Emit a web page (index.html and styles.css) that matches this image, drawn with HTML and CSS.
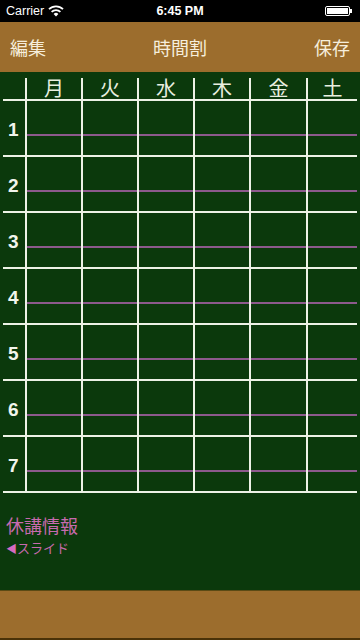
FILE: index.html
```html
<!DOCTYPE html>
<html lang="ja">
<head>
<meta charset="utf-8">
<link rel="stylesheet" href="styles.css">
</head>
<body>
<div class="screen">
  <div class="status">
    <div class="status-left">
      <span>Carrier</span>
      <svg class="wifi" width="16" height="12" viewBox="0 0 16 12">
        <path d="M1 4.2 A10 10 0 0 1 15 4.2" stroke="#fff" stroke-width="1.8" fill="none"/>
        <path d="M3.6 6.8 A6.4 6.4 0 0 1 12.4 6.8" stroke="#fff" stroke-width="1.8" fill="none"/>
        <path d="M8 11.5 L5.6 9 A3.4 3.4 0 0 1 10.4 9 Z" fill="#fff"/>
      </svg>
    </div>
    <div class="status-time">6:45 PM</div>
    <div class="status-right">
      <div class="battery"><div class="battery-fill"></div></div>
      <div class="battery-nib"></div>
    </div>
  </div>
  <div class="navbar">
    <span class="nav-btn">編集</span>
    <span class="nav-title">時間割</span>
    <span class="nav-btn">保存</span>
  </div>
  <div class="board">
    <div class="timetable">
      <div class="row head">
        <div class="corner"></div>
        <div class="day"><span>月</span></div>
        <div class="day"><span>火</span></div>
        <div class="day"><span>水</span></div>
        <div class="day"><span>木</span></div>
        <div class="day"><span>金</span></div>
        <div class="day"><span>土</span></div>
      </div>
      <div class="row period"><div class="num">1</div><div class="cell"></div><div class="cell"></div><div class="cell"></div><div class="cell"></div><div class="cell"></div><div class="cell"></div></div>
      <div class="row period"><div class="num">2</div><div class="cell"></div><div class="cell"></div><div class="cell"></div><div class="cell"></div><div class="cell"></div><div class="cell"></div></div>
      <div class="row period"><div class="num">3</div><div class="cell"></div><div class="cell"></div><div class="cell"></div><div class="cell"></div><div class="cell"></div><div class="cell"></div></div>
      <div class="row period"><div class="num">4</div><div class="cell"></div><div class="cell"></div><div class="cell"></div><div class="cell"></div><div class="cell"></div><div class="cell"></div></div>
      <div class="row period"><div class="num">5</div><div class="cell"></div><div class="cell"></div><div class="cell"></div><div class="cell"></div><div class="cell"></div><div class="cell"></div></div>
      <div class="row period"><div class="num">6</div><div class="cell"></div><div class="cell"></div><div class="cell"></div><div class="cell"></div><div class="cell"></div><div class="cell"></div></div>
      <div class="row period last"><div class="num">7</div><div class="cell"></div><div class="cell"></div><div class="cell"></div><div class="cell"></div><div class="cell"></div><div class="cell"></div></div>
    </div>
    <div class="notice">
      <div class="notice-title">休講情報</div>
      <div class="notice-hint"><span class="arrow">◀</span>スライド</div>
    </div>
  </div>
  <div class="footer"></div>
</div>
</body>
</html>
```

FILE: styles.css
```css
* { box-sizing: border-box; }
html, body { margin: 0; padding: 0; background: #000; }
.screen {
  width: 360px;
  height: 640px;
  display: flex;
  flex-direction: column;
  font-family: "Liberation Sans", "Noto Sans CJK JP", sans-serif;
  overflow: hidden;
}
.status {
  height: 22px;
  background: #000;
  color: #fff;
  display: flex;
  align-items: center;
  justify-content: space-between;
  padding: 0 6px;
  font-size: 12.5px;
}
.status-left { display: flex; align-items: center; gap: 4px; width: 90px; }
.wifi { margin-top: -1px; }
.status-time { font-weight: bold; font-size: 12.5px; }
.status-right { display: flex; align-items: center; width: 90px; justify-content: flex-end; }
.battery {
  width: 25px;
  height: 10px;
  border: 1px solid #fff;
  border-radius: 2px;
  padding: 1px;
}
.battery-fill { width: 100%; height: 100%; background: #fff; }
.battery-nib { width: 2px; height: 4px; background: #fff; margin-right: 2px; }
.navbar {
  height: 50px;
  background: #9c6d2d;
  display: flex;
  align-items: center;
  justify-content: space-between;
  padding: 0 10px;
  color: #f6eedc;
  font-family: "Noto Sans CJK JP", sans-serif;
  font-size: 18px;
}
.board {
  flex: 1;
  background: #0b390c;
  padding-left: 3px;
}
.timetable { width: 354px; }
.row {
  display: grid;
  grid-template-columns: 22px 56px 56px 56px 56px 57px 51px;
}
.head { height: 29px; border-bottom: 2px solid #edf2e6; }
.day {
  margin-top: 6px;
  border-left: 2px solid #edf2e6;
  display: flex;
  justify-content: center;
  align-items: flex-end;
  color: #e9efe0;
  font-family: "Noto Sans CJK JP", sans-serif;
  font-size: 20px;
  line-height: 20px;
  padding-bottom: 1px;
}
.period { height: 56px; border-bottom: 2px solid #edf2e6; }
.period .num {
  color: #f2f5ec;
  font-weight: bold;
  font-size: 19px;
  line-height: 18px;
  padding-left: 5px;
  padding-top: 20px;
}
.cell {
  border-left: 2px solid #edf2e6;
  background: linear-gradient(to bottom, transparent 33px, #8d5a8c 33px, #8d5a8c 35px, transparent 35px);
}
.notice {
  padding: 19px 0 0 3px;
  color: #c76aae;
  font-family: "Noto Sans CJK JP", sans-serif;
}
.notice-title { font-size: 18px; line-height: 26px; }
.notice-hint { font-size: 13px; line-height: 19px; }
.arrow { font-size: 11px; color: #d76bc0; }
.footer {
  height: 50px;
  background: #9c6d2d;
  border-top: 1px solid #5b4a14;
  border-bottom: 2px solid #4a3208;
}
```
